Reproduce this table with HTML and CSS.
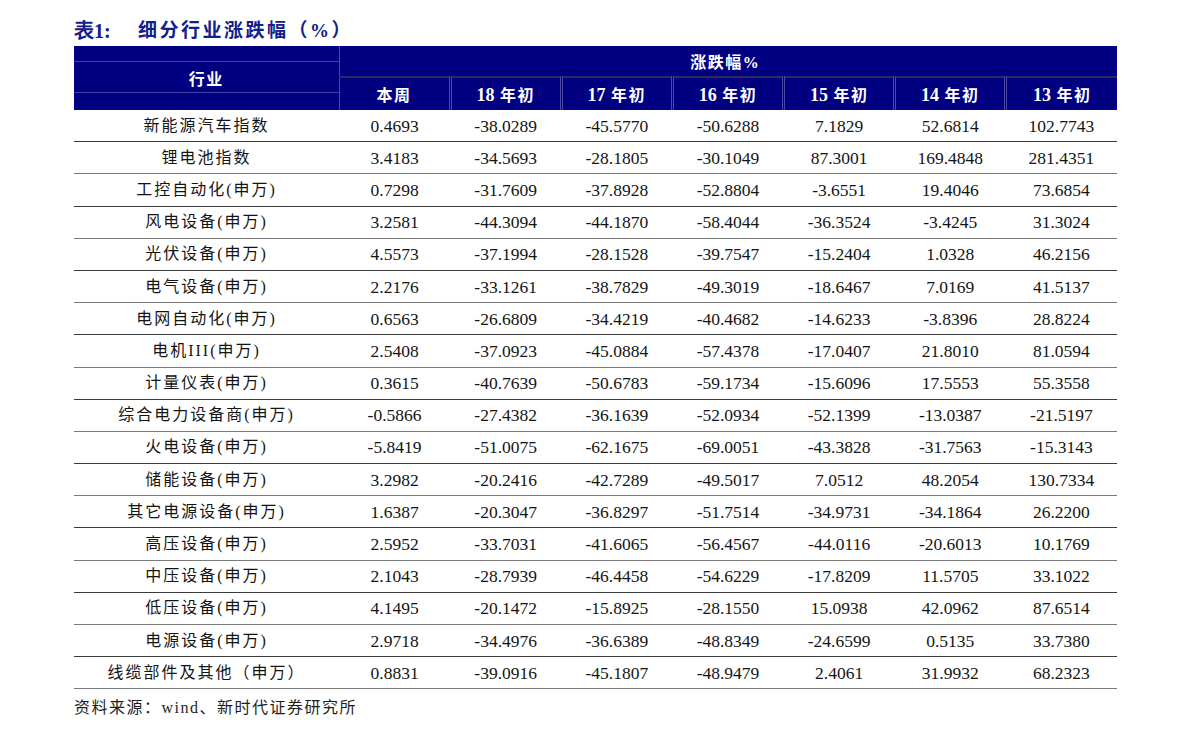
FILE: index.html
```html
<!DOCTYPE html>
<html lang="zh-CN">
<head>
<meta charset="utf-8">
<title>细分行业涨跌幅</title>
<link rel="stylesheet" href="styles.css">
</head>
<body>
<div class="page">
  <h1 class="title"><span class="title-no">表1:</span><span class="title-text">细分行业涨跌幅（%）</span></h1>
  <table class="data">
    <colgroup>
      <col class="col-name">
      <col><col><col><col><col><col><col>
    </colgroup>
    <thead>
      <tr class="hr1">
        <th rowspan="2" class="h-name">行业</th>
        <th colspan="7" class="h-group">涨跌幅%</th>
      </tr>
      <tr class="hr2">
        <th class="h-first">本周</th>
        <th><span class="d">18</span> 年初</th>
        <th><span class="d">17</span> 年初</th>
        <th><span class="d">16</span> 年初</th>
        <th><span class="d">15</span> 年初</th>
        <th><span class="d">14</span> 年初</th>
        <th><span class="d">13</span> 年初</th>
      </tr>
    </thead>
    <tbody>
      <tr><td class="name">新能源汽车指数</td><td>0.4693</td><td>-38.0289</td><td>-45.5770</td><td>-50.6288</td><td>7.1829</td><td>52.6814</td><td>102.7743</td></tr>
      <tr><td class="name">锂电池指数</td><td>3.4183</td><td>-34.5693</td><td>-28.1805</td><td>-30.1049</td><td>87.3001</td><td>169.4848</td><td>281.4351</td></tr>
      <tr><td class="name">工控自动化(申万)</td><td>0.7298</td><td>-31.7609</td><td>-37.8928</td><td>-52.8804</td><td>-3.6551</td><td>19.4046</td><td>73.6854</td></tr>
      <tr><td class="name">风电设备(申万)</td><td>3.2581</td><td>-44.3094</td><td>-44.1870</td><td>-58.4044</td><td>-36.3524</td><td>-3.4245</td><td>31.3024</td></tr>
      <tr><td class="name">光伏设备(申万)</td><td>4.5573</td><td>-37.1994</td><td>-28.1528</td><td>-39.7547</td><td>-15.2404</td><td>1.0328</td><td>46.2156</td></tr>
      <tr><td class="name">电气设备(申万)</td><td>2.2176</td><td>-33.1261</td><td>-38.7829</td><td>-49.3019</td><td>-18.6467</td><td>7.0169</td><td>41.5137</td></tr>
      <tr><td class="name">电网自动化(申万)</td><td>0.6563</td><td>-26.6809</td><td>-34.4219</td><td>-40.4682</td><td>-14.6233</td><td>-3.8396</td><td>28.8224</td></tr>
      <tr><td class="name">电机III(申万)</td><td>2.5408</td><td>-37.0923</td><td>-45.0884</td><td>-57.4378</td><td>-17.0407</td><td>21.8010</td><td>81.0594</td></tr>
      <tr><td class="name">计量仪表(申万)</td><td>0.3615</td><td>-40.7639</td><td>-50.6783</td><td>-59.1734</td><td>-15.6096</td><td>17.5553</td><td>55.3558</td></tr>
      <tr><td class="name">综合电力设备商(申万)</td><td>-0.5866</td><td>-27.4382</td><td>-36.1639</td><td>-52.0934</td><td>-52.1399</td><td>-13.0387</td><td>-21.5197</td></tr>
      <tr><td class="name">火电设备(申万)</td><td>-5.8419</td><td>-51.0075</td><td>-62.1675</td><td>-69.0051</td><td>-43.3828</td><td>-31.7563</td><td>-15.3143</td></tr>
      <tr><td class="name">储能设备(申万)</td><td>3.2982</td><td>-20.2416</td><td>-42.7289</td><td>-49.5017</td><td>7.0512</td><td>48.2054</td><td>130.7334</td></tr>
      <tr><td class="name">其它电源设备(申万)</td><td>1.6387</td><td>-20.3047</td><td>-36.8297</td><td>-51.7514</td><td>-34.9731</td><td>-34.1864</td><td>26.2200</td></tr>
      <tr><td class="name">高压设备(申万)</td><td>2.5952</td><td>-33.7031</td><td>-41.6065</td><td>-56.4567</td><td>-44.0116</td><td>-20.6013</td><td>10.1769</td></tr>
      <tr><td class="name">中压设备(申万)</td><td>2.1043</td><td>-28.7939</td><td>-46.4458</td><td>-54.6229</td><td>-17.8209</td><td>11.5705</td><td>33.1022</td></tr>
      <tr><td class="name">低压设备(申万)</td><td>4.1495</td><td>-20.1472</td><td>-15.8925</td><td>-28.1550</td><td>15.0938</td><td>42.0962</td><td>87.6514</td></tr>
      <tr><td class="name">电源设备(申万)</td><td>2.9718</td><td>-34.4976</td><td>-36.6389</td><td>-48.8349</td><td>-24.6599</td><td>0.5135</td><td>33.7380</td></tr>
      <tr><td class="name">线缆部件及其他（申万）</td><td>0.8831</td><td>-39.0916</td><td>-45.1807</td><td>-48.9479</td><td>2.4061</td><td>31.9932</td><td>68.2323</td></tr>
    </tbody>
  </table>
  <p class="source">资料来源：wind、新时代证券研究所</p>
</div>
</body>
</html>
```

FILE: styles.css
```css
html, body {
  margin: 0;
  padding: 0;
  background: #ffffff;
}

body {
  font-family: "Liberation Serif", "Noto Sans CJK SC", serif;
  color: #141414;
}

.page {
  width: 1043px;
  margin-left: 74px;
  padding-top: 16px;
}

.title {
  margin: 0;
  height: 30px;
  display: flex;
  align-items: center;
  font-size: 19px;
  font-weight: bold;
  color: #13208a;
  line-height: 26px;
}

.title-no {
  width: 64px;
  font-family: "Liberation Serif", serif;
  font-size: 20px;
}

.title-text {
  letter-spacing: 2.5px;
  font-family: "Liberation Serif", "Noto Sans CJK SC", sans-serif;
}

.data {
  width: 1043px;
  table-layout: fixed;
  border-collapse: collapse;
}

.col-name {
  width: 265px;
}

.data th {
  background: #000080;
  color: #ffffff;
  font-weight: bold;
  padding: 0;
  text-align: center;
  font-size: 16px;
  letter-spacing: 1.5px;
}

.data th .d {
  font-size: 18px;
  letter-spacing: 0;
}

.hr1 th {
  height: 30px;
}

.hr2 th {
  height: 32px;
  border-left: 3px double #4a4aa6;
}

.hr2 th.h-first {
  border-left: 1px solid #4a4aa6;
}

.h-name {
  border-right: 1px solid #4a4aa6;
  background:
    linear-gradient(to bottom,
      transparent 15px, #4040a0 15px, #4040a0 16px, transparent 16px,
      transparent 46px, #4040a0 46px, #4040a0 47px, transparent 47px),
    #000080 !important;
}

.h-group {
  border-bottom: 2px solid #2c2c5e;
  padding-right: 6px !important;
}

.data td {
  height: 31.2px;
  padding: 0;
  text-align: center;
  font-size: 17.5px;
  border-bottom: 1px solid #3a3a3a;
  line-height: 20px;
}

.data tbody tr:nth-child(even) td {
  border-bottom-color: #7a7a7a;
}

.data td.name {
  font-size: 16px;
  letter-spacing: 2px;
}

.source {
  margin: 9px 0 0 0;
  font-size: 16px;
  line-height: 20px;
  letter-spacing: 1.5px;
  color: #1e1e1e;
}
```
